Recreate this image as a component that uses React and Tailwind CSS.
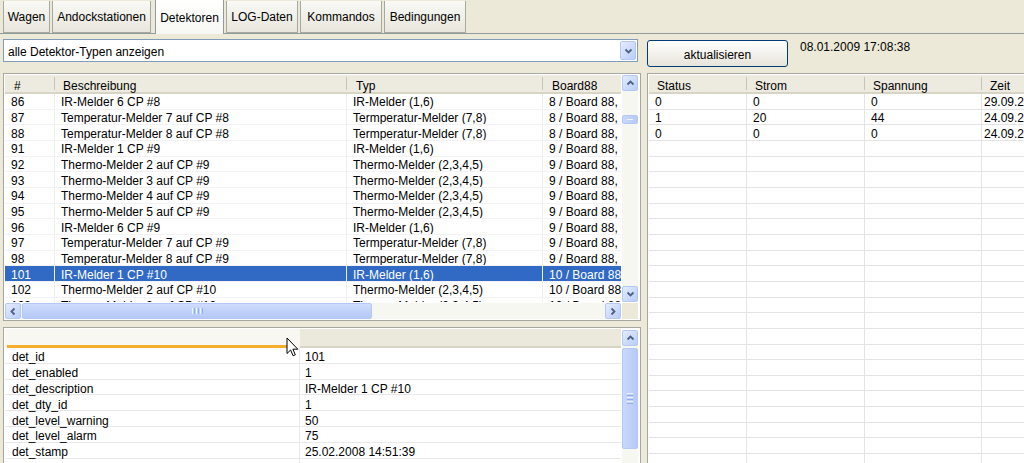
import React from "react";

const TOP_ROWS = [
  ["86", "IR-Melder 6 CP #8", "IR-Melder (1,6)", "8 / Board 88, CP 8"],
  ["87", "Temperatur-Melder 7 auf CP #8", "Termperatur-Melder (7,8)", "8 / Board 88, CP 8"],
  ["88", "Temperatur-Melder 8 auf CP #8", "Termperatur-Melder (7,8)", "8 / Board 88, CP 8"],
  ["91", "IR-Melder 1 CP #9", "IR-Melder (1,6)", "9 / Board 88, CP 9"],
  ["92", "Thermo-Melder 2 auf CP #9", "Thermo-Melder (2,3,4,5)", "9 / Board 88, CP 9"],
  ["93", "Thermo-Melder 3 auf CP #9", "Thermo-Melder (2,3,4,5)", "9 / Board 88, CP 9"],
  ["94", "Thermo-Melder 4 auf CP #9", "Thermo-Melder (2,3,4,5)", "9 / Board 88, CP 9"],
  ["95", "Thermo-Melder 5 auf CP #9", "Thermo-Melder (2,3,4,5)", "9 / Board 88, CP 9"],
  ["96", "IR-Melder 6 CP #9", "IR-Melder (1,6)", "9 / Board 88, CP 9"],
  ["97", "Temperatur-Melder 7 auf CP #9", "Termperatur-Melder (7,8)", "9 / Board 88, CP 9"],
  ["98", "Temperatur-Melder 8 auf CP #9", "Termperatur-Melder (7,8)", "9 / Board 88, CP 9"],
  ["101", "IR-Melder 1 CP #10", "IR-Melder (1,6)", "10 / Board 88, CP 10", true],
  ["102", "Thermo-Melder 2 auf CP #10", "Thermo-Melder (2,3,4,5)", "10 / Board 88, CP 10"],
  ["103", "Thermo-Melder 3 auf CP #10", "Thermo-Melder (2,3,4,5)", "10 / Board 88, CP 10"],
];

const DETAIL_ROWS = [
  ["det_id", "101"],
  ["det_enabled", "1"],
  ["det_description", "IR-Melder 1 CP #10"],
  ["det_dty_id", "1"],
  ["det_level_warning", "50"],
  ["det_level_alarm", "75"],
  ["det_stamp", "25.02.2008 14:51:39"],
  ["", ""],
];

const RIGHT_ROWS = [
  ["0", "0", "0", "29.09.2008 10:12:44"],
  ["1", "20", "44", "24.09.2008 16:40:02"],
  ["0", "0", "0", "24.09.2008 16:38:51"],
];

const TABS = [
  ["Wagen", 47],
  ["Andockstationen", 99],
  ["Detektoren", 69, true],
  ["LOG-Daten", 72],
  ["Kommandos", 82],
  ["Bedingungen", 82],
];

function Chevron({ dir }) {
  if (dir === "up" || dir === "down") {
    const pts = dir === "up" ? "1.5,5.5 4.5,2.5 7.5,5.5" : "1.5,2.5 4.5,5.5 7.5,2.5";
    return (
      <svg width="9" height="8" viewBox="0 0 9 8">
        <polyline points={pts} fill="none" stroke="#4D6185" strokeWidth="1.8" />
      </svg>
    );
  }
  const pts = dir === "left" ? "5.5,1.5 2.5,4.5 5.5,7.5" : "2.5,1.5 5.5,4.5 2.5,7.5";
  return (
    <svg width="8" height="9" viewBox="0 0 8 9">
      <polyline points={pts} fill="none" stroke="#4D6185" strokeWidth="1.8" />
    </svg>
  );
}

function SBtn({ dir, className = "" }) {
  return (
    <div
      className={
        "w-[16px] h-[16px] shrink-0 rounded-[2px] border border-[#B5C8F4] bg-gradient-to-br from-[#E4ECFE] to-[#B9CDF8] flex items-center justify-center " +
        className
      }
    >
      <Chevron dir={dir} />
    </div>
  );
}

function VGrip() {
  return (
    <div className="flex flex-col gap-[1px]">
      <div className="w-[6px] h-[1px] bg-[#EEF4FE]" />
      <div className="w-[6px] h-[1px] bg-[#8CB0F8]" />
      <div className="w-[6px] h-[1px] bg-[#EEF4FE]" />
      <div className="w-[6px] h-[1px] bg-[#8CB0F8]" />
      <div className="w-[6px] h-[1px] bg-[#EEF4FE]" />
      <div className="w-[6px] h-[1px] bg-[#8CB0F8]" />
    </div>
  );
}

function HGrip() {
  return (
    <div className="flex gap-[1px]">
      <div className="h-[6px] w-[1px] bg-[#EEF4FE]" />
      <div className="h-[6px] w-[1px] bg-[#8CB0F8]" />
      <div className="h-[6px] w-[1px] bg-[#EEF4FE]" />
      <div className="h-[6px] w-[1px] bg-[#8CB0F8]" />
      <div className="h-[6px] w-[1px] bg-[#EEF4FE]" />
      <div className="h-[6px] w-[1px] bg-[#8CB0F8]" />
    </div>
  );
}

function HeaderSep() {
  return <div className="w-[1px] h-[13px] bg-[#C7C5B2] self-center shrink-0" />;
}

function Cursor() {
  return (
    <svg width="13" height="21" viewBox="0 0 13 21" className="absolute left-[286px] top-[337px]">
      <path
        d="M1 1 L1 16.5 L4.6 13 L7.1 18.8 L9.3 17.8 L6.9 12.2 L11.8 12.2 Z"
        fill="white"
        stroke="black"
        strokeWidth="1"
        strokeLinejoin="round"
      />
    </svg>
  );
}

export default function App() {
  return (
    <div className="relative w-[1024px] h-[463px] overflow-hidden bg-[#ECE9D8] font-['Liberation_Sans',Arial,sans-serif] text-[12px] leading-none text-black">
      {/* Tabs */}
      <div className="flex items-end h-[34px] pl-[3px] border-b border-[#919B9C]">
        {TABS.map(([label, w, sel]) => (
          <div
            key={label}
            style={{ width: w }}
            className={
              sel
                ? "h-[35px] mb-[-1px] mx-[2px] shrink-0 border-l border-r border-[#919B9C] bg-gradient-to-b from-[#FFFFFF] to-[#F7F7F3] flex items-center justify-center pt-[3px]"
                : "h-[32px] mr-[2px] shrink-0 border-l border-r border-b border-[#A6A9A2] bg-gradient-to-b from-[#F9F9F6] to-[#E8E6DC] flex items-center justify-center"
            }
          >
            {label}
          </div>
        ))}
      </div>

      <div className="flex">
        {/* Left column */}
        <div className="w-[641px] shrink-0 pl-[3px] flex flex-col">
          {/* Dropdown */}
          <div className="mt-[5px] w-[635px] h-[23px] border border-[#7F9DB9] bg-white flex items-center">
            <span className="pl-[4px] pt-[2px]">alle Detektor-Typen anzeigen</span>
            <div className="ml-auto mr-[1px] w-[16px] h-[19px] rounded-[2px] border border-[#B5C8F4] bg-gradient-to-br from-[#E4ECFE] to-[#B9CDF8] flex items-center justify-center">
              <Chevron dir="down" />
            </div>
          </div>

          {/* Top list */}
          <div className="mt-[11px] w-[638px] h-[248px] border border-[#A5A7A0] p-[1px] bg-white flex flex-col">
            <div className="flex h-[227px]">
              <div className="w-[616px] shrink-0 overflow-hidden">
                <div className="flex h-[19px] bg-[#EDEBE0] border-b-2 border-[#D8D5C6] whitespace-nowrap">
                  <div className="w-[49px] shrink-0 pl-[9px] pt-[5px] flex items-center">#</div>
                  <HeaderSep />
                  <div className="w-[291px] shrink-0 pl-[8px] pt-[5px] flex items-center">Beschreibung</div>
                  <HeaderSep />
                  <div className="w-[195px] shrink-0 pl-[9px] pt-[5px] flex items-center">Typ</div>
                  <HeaderSep />
                  <div className="w-[77px] shrink-0 pl-[9px] pt-[5px] flex items-center">Board88</div>
                </div>
                {TOP_ROWS.map(([n, d, t, b, sel]) => (
                  <div
                    key={n}
                    className={
                      "flex h-[15.67px] items-center whitespace-nowrap border-b border-[#F3F3F3] " +
                      (sel ? "bg-[#316AC5] text-white" : "")
                    }
                  >
                    <div className="w-[50px] shrink-0 h-full flex items-center pl-[6px] pt-[2px] overflow-hidden border-r border-[#EEEEEE]">{n}</div>
                    <div className="w-[292px] shrink-0 h-full flex items-center pl-[6px] pt-[2px] overflow-hidden border-r border-[#EEEEEE]">{d}</div>
                    <div className="w-[196px] shrink-0 h-full flex items-center pl-[6px] pt-[2px] overflow-hidden border-r border-[#EEEEEE]">{t}</div>
                    <div className="w-[78px] shrink-0 h-full flex items-center pl-[6px] pt-[2px] overflow-hidden">{b}</div>
                  </div>
                ))}
              </div>
              <div className="ml-[1px] w-[16px] bg-[#F7F7F2] flex flex-col">
                <SBtn dir="up" />
                <div className="mt-[24px] h-[9px] w-[16px] rounded-[2px] border border-[#B5C8F4] bg-gradient-to-r from-[#C9D8FC] to-[#B6CAF7] flex items-center justify-center">
                  <div className="w-[6px] h-[1px] bg-[#EEF4FE]" />
                </div>
                <div className="flex-1" />
                <SBtn dir="down" />
              </div>
            </div>
            <div className="flex h-[16px] mt-[1px]">
              <div className="w-[616px] bg-[#F7F7F2] flex">
                <SBtn dir="left" />
                <div className="ml-[1px] w-[350px] h-[16px] rounded-[2px] border border-[#B5C8F4] bg-gradient-to-b from-[#CEDCFD] to-[#B4C8F6] flex items-center justify-center">
                  <HGrip />
                </div>
                <div className="flex-1" />
                <SBtn dir="right" />
              </div>
              <div className="ml-[1px] w-[16px] bg-[#ECE9D8]" />
            </div>
          </div>

          {/* Bottom detail panel */}
          <div className="mt-[6px] w-[638px] h-[140px] border border-[#A5A7A0] p-[1px] bg-white flex">
            <div className="w-[616px] shrink-0 overflow-hidden">
              <div className="flex h-[19px]">
                <div className="w-[295px] shrink-0 h-full bg-[#F8F7F2] flex flex-col justify-end">
                  <div className="ml-[2px] w-[282px] h-[3px] bg-[#F5AD2E]" />
                </div>
                <div className="flex-1 h-full bg-[#EBE9DC] border-b-2 border-[#D8D5C6]" />
              </div>
              {DETAIL_ROWS.map(([k, v], i) => (
                <div key={i} className="flex h-[15.8px] border-b border-[#E8E8E8] whitespace-nowrap">
                  <div className="w-[295px] shrink-0 h-full flex items-center pl-[7px] pt-[4px] border-r border-[#E8E8E8]">{k}</div>
                  <div className="flex-1 h-full flex items-center pl-[5px] pt-[4px]">{v}</div>
                </div>
              ))}
            </div>
            <div className="ml-[1px] mt-[1px] w-[16px] bg-[#F7F7F2] flex flex-col">
              <SBtn dir="up" />
              <div className="mt-[2px] h-[101px] w-[16px] rounded-[2px] border border-[#B5C8F4] bg-gradient-to-r from-[#C9D8FC] to-[#B6CAF7] flex items-center justify-center">
                <VGrip />
              </div>
            </div>
          </div>
        </div>

        {/* Right column */}
        <div className="flex-1 pl-[6px] flex flex-col min-w-0">
          <div className="flex mt-[6px] h-[27px]">
            <div className="w-[141px] shrink-0 h-[27px] rounded-[3px] border border-[#003C74] bg-gradient-to-b from-[#FFFFFF] to-[#E6E4DA] flex items-center justify-center pt-[3px]">
              aktualisieren
            </div>
            <div className="ml-[12px] pt-[1px] whitespace-nowrap">08.01.2009 17:08:38</div>
          </div>
          <div className="mt-[6px] h-[400px] border-l border-t border-[#A5A7A0] p-[1px] bg-white overflow-hidden">
            <div className="flex h-[19px] w-[600px] bg-[#EDEBE0] border-b-2 border-[#D8D5C6] whitespace-nowrap">
              <div className="w-[97px] shrink-0 pl-[8px] pt-[5px] flex items-center">Status</div>
              <HeaderSep />
              <div className="w-[117px] shrink-0 pl-[8px] pt-[5px] flex items-center">Strom</div>
              <HeaderSep />
              <div className="w-[116px] shrink-0 pl-[8px] pt-[5px] flex items-center">Spannung</div>
              <HeaderSep />
              <div className="w-[140px] shrink-0 pl-[8px] pt-[5px] flex items-center">Zeit</div>
            </div>
            {Array.from({ length: 25 }).map((_, i) => {
              const r = RIGHT_ROWS[i] || ["", "", "", ""];
              return (
                <div key={i} className="flex w-[600px] h-[15.67px] border-b border-[#E4E4E4] whitespace-nowrap">
                  <div className="w-[98px] shrink-0 h-full flex items-center pl-[6px] pt-[2px] border-r border-[#E4E4E4]">{r[0]}</div>
                  <div className="w-[118px] shrink-0 h-full flex items-center pl-[6px] pt-[2px] border-r border-[#E4E4E4]">{r[1]}</div>
                  <div className="w-[117px] shrink-0 h-full flex items-center pl-[6px] pt-[2px] border-r border-[#E4E4E4]">{r[2]}</div>
                  <div className="w-[140px] shrink-0 h-full flex items-center pl-[2px] pt-[2px] border-r border-[#E4E4E4]">{r[3]}</div>
                </div>
              );
            })}
          </div>
        </div>
      </div>

      <Cursor />
    </div>
  );
}
